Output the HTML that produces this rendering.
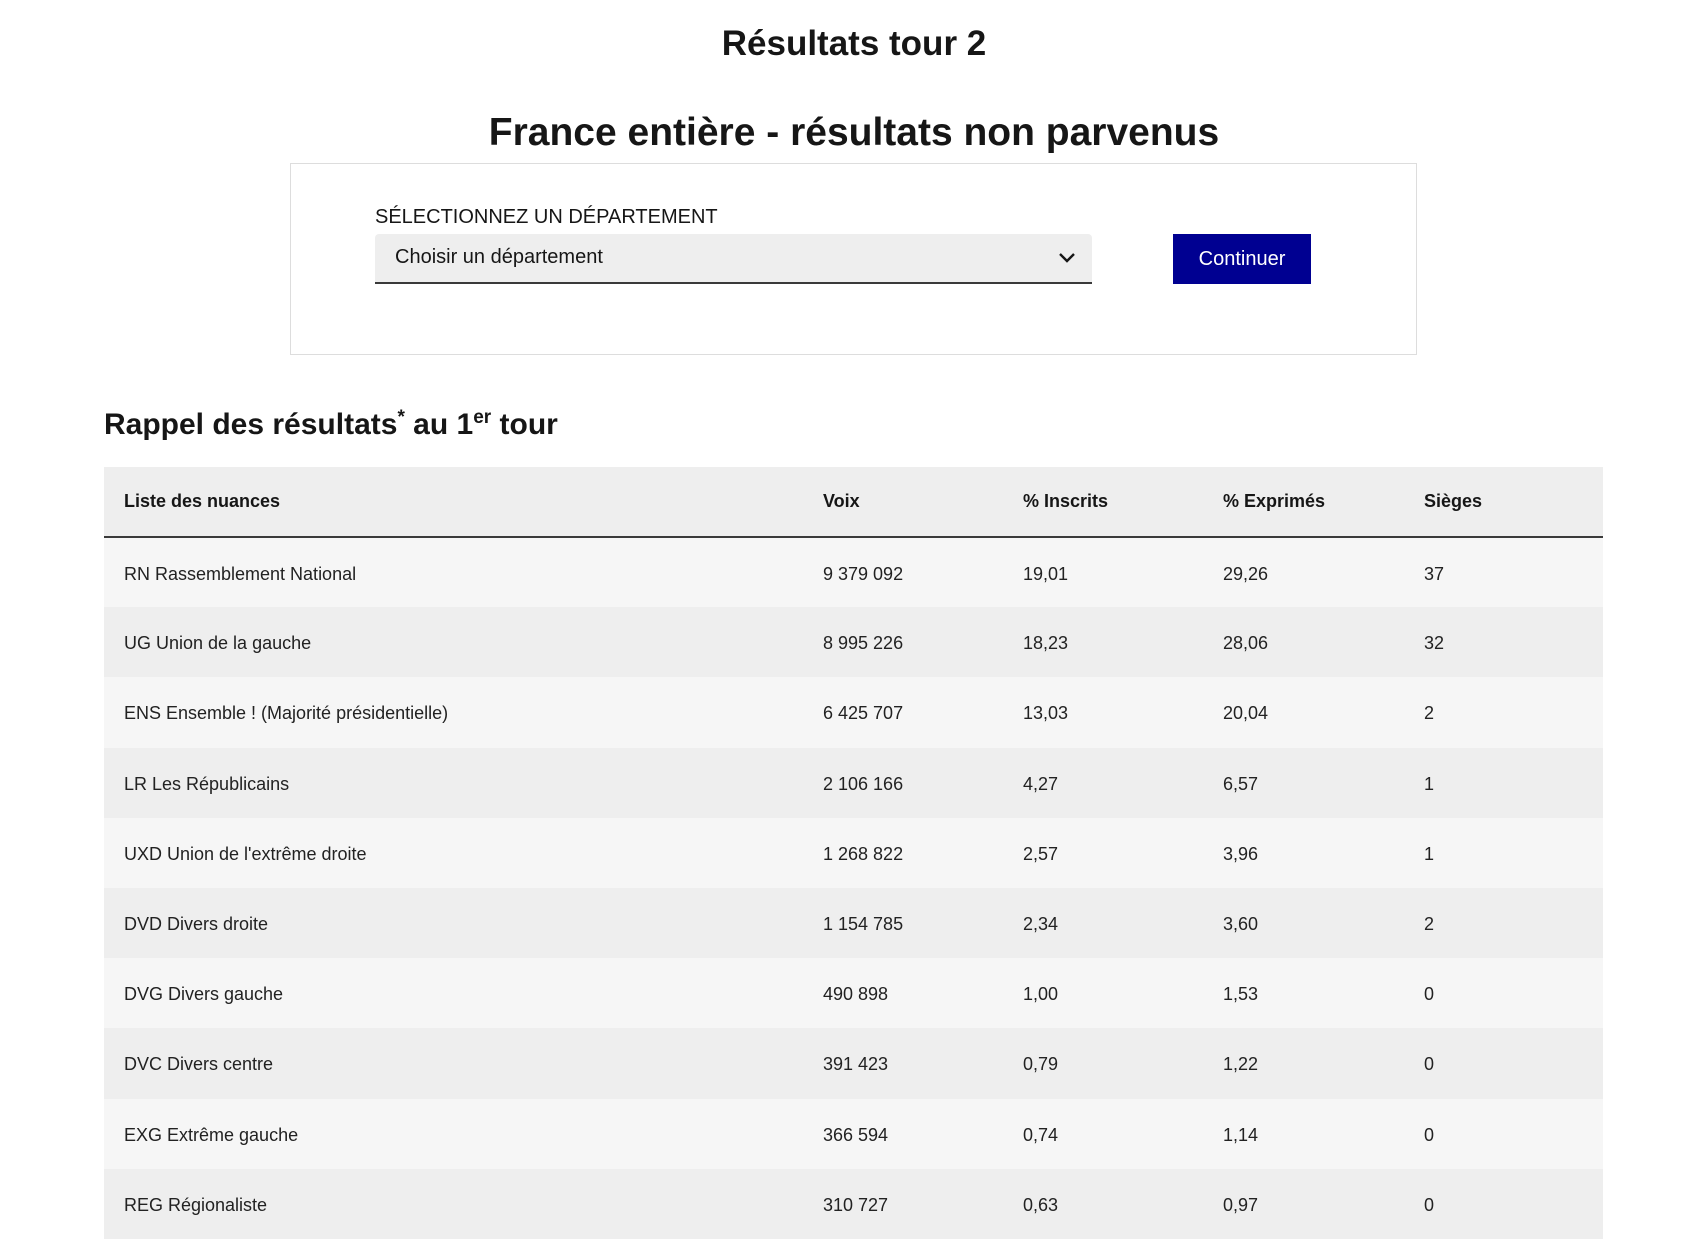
<!DOCTYPE html>
<html><head><meta charset="utf-8"><style>
*{margin:0;padding:0;box-sizing:border-box}
body{width:1694px;height:1230px;background:#fff;font-family:"Liberation Sans",sans-serif;color:#161616;position:relative;overflow:hidden}
.a{position:absolute}
h1{position:absolute;left:0;width:1708px;text-align:center;font-weight:bold}
.box{left:290px;top:163px;width:1127px;height:192px;border:1px solid #ddd}
.lbl{left:375px;top:206px;font-size:20px;color:#161616}
.sel{left:375px;top:234px;width:717px;height:50px;background:#eee;border-bottom:2px solid #3a3a3a;font-size:20px;padding:12px 20px;border-radius:4px 4px 0 0}
.btn{left:1173px;top:234px;width:138px;height:50px;background:#000091;color:#fff;font-size:20px;text-align:center;line-height:50px}
table{position:absolute;left:104px;top:467px;width:1499px;border-collapse:collapse;font-size:18px}
th{text-align:left;font-weight:bold;height:70px;background:#eee;border-bottom:2px solid #3a3a3a;padding-left:20px}
td{height:70.2px;padding-left:20px;padding-top:3px;color:#222}
tr:nth-child(odd) td{background:#f6f6f6}
tr:nth-child(even) td{background:#eee}
</style></head><body>
<h1 style="top:24px;font-size:35px">Résultats tour 2</h1>
<h1 style="top:111px;font-size:39px">France entière - résultats non parvenus</h1>
<div class="a box"></div>
<div class="a lbl">SÉLECTIONNEZ UN DÉPARTEMENT</div>
<div class="a sel">Choisir un département<svg style="position:absolute;right:16px;top:18px" width="18" height="12" viewBox="0 0 18 12"><path d="M2 2l7 7 7-7" fill="none" stroke="#161616" stroke-width="2.4"/></svg></div>
<div class="a btn">Continuer</div>
<div class="a" style="left:104px;top:407px;font-size:30px;font-weight:bold">Rappel des résultats<sup style="font-size:19px">*</sup> au 1<sup style="font-size:19px">er</sup> tour</div>
<table>
<thead><tr><th style="width:699px">Liste des nuances</th><th style="width:200px">Voix</th><th style="width:200px">% Inscrits</th><th style="width:201px">% Exprimés</th><th>Sièges</th></tr></thead>
<tbody>
<tr><td>RN Rassemblement National</td><td>9 379 092</td><td>19,01</td><td>29,26</td><td>37</td></tr>
<tr><td>UG Union de la gauche</td><td>8 995 226</td><td>18,23</td><td>28,06</td><td>32</td></tr>
<tr><td>ENS Ensemble ! (Majorité présidentielle)</td><td>6 425 707</td><td>13,03</td><td>20,04</td><td>2</td></tr>
<tr><td>LR Les Républicains</td><td>2 106 166</td><td>4,27</td><td>6,57</td><td>1</td></tr>
<tr><td>UXD Union de l'extrême droite</td><td>1 268 822</td><td>2,57</td><td>3,96</td><td>1</td></tr>
<tr><td>DVD Divers droite</td><td>1 154 785</td><td>2,34</td><td>3,60</td><td>2</td></tr>
<tr><td>DVG Divers gauche</td><td>490 898</td><td>1,00</td><td>1,53</td><td>0</td></tr>
<tr><td>DVC Divers centre</td><td>391 423</td><td>0,79</td><td>1,22</td><td>0</td></tr>
<tr><td>EXG Extrême gauche</td><td>366 594</td><td>0,74</td><td>1,14</td><td>0</td></tr>
<tr><td>REG Régionaliste</td><td>310 727</td><td>0,63</td><td>0,97</td><td>0</td></tr>
</tbody></table>
</body></html>
